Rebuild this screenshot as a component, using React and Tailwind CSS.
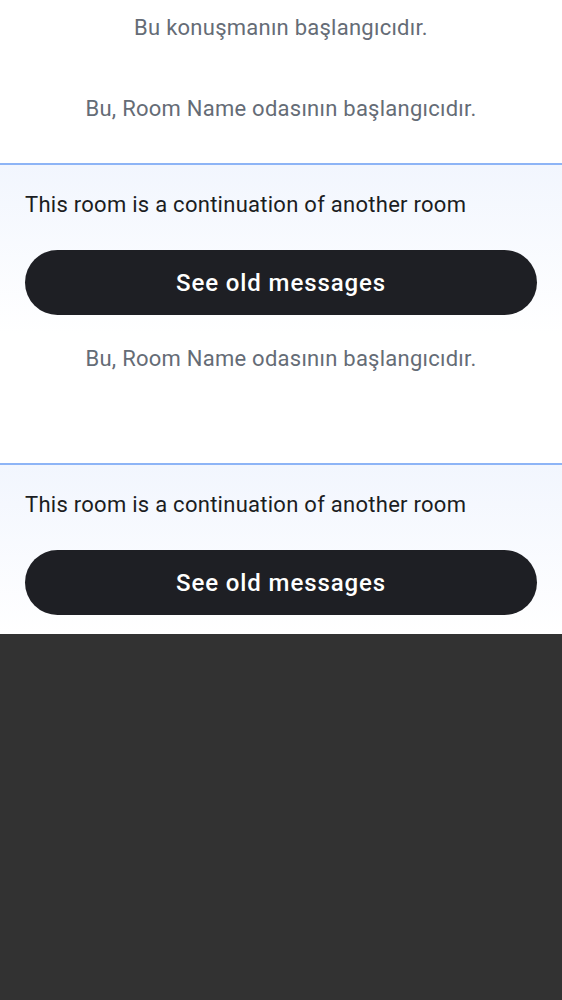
export default function App() {
  const font = { fontFamily: "Roboto, 'Noto Sans', sans-serif" };
  const Continuation = () => (
    <div>
      <div className="h-[2px] bg-[#8db4f6]" />
      <div className="bg-gradient-to-b from-[#f2f6fe] to-white px-[25px] pt-[26px] pb-[19px]">
        <p className="text-[22px] leading-[28px] tracking-[0.27px] text-[#1b1d22]">This room is a continuation of another room</p>
        <button className="mt-[31px] flex h-[65px] w-full items-center justify-center rounded-full bg-[#1e1f24] text-[24px] font-medium tracking-[0.9px] text-white">
          See old messages
        </button>
      </div>
    </div>
  );
  return (
    <div className="min-h-screen bg-[#323232]" style={font}>
      <div className="bg-white">
        <p className="pt-[14px] text-center text-[22px] leading-[28px] tracking-[0.25px] text-[#656c76]">Bu konuşmanın başlangıcıdır.</p>
        <p className="mt-[53px] text-center text-[22px] leading-[28px] tracking-[0.25px] text-[#656c76]">Bu, Room Name odasının başlangıcıdır.</p>
        <div className="mt-[40px]">
          <Continuation />
        </div>
        <p className="mt-[11px] text-center text-[22px] leading-[28px] tracking-[0.25px] text-[#656c76]">Bu, Room Name odasının başlangıcıdır.</p>
        <div className="mt-[90px]">
          <Continuation />
        </div>
      </div>
    </div>
  );
}
